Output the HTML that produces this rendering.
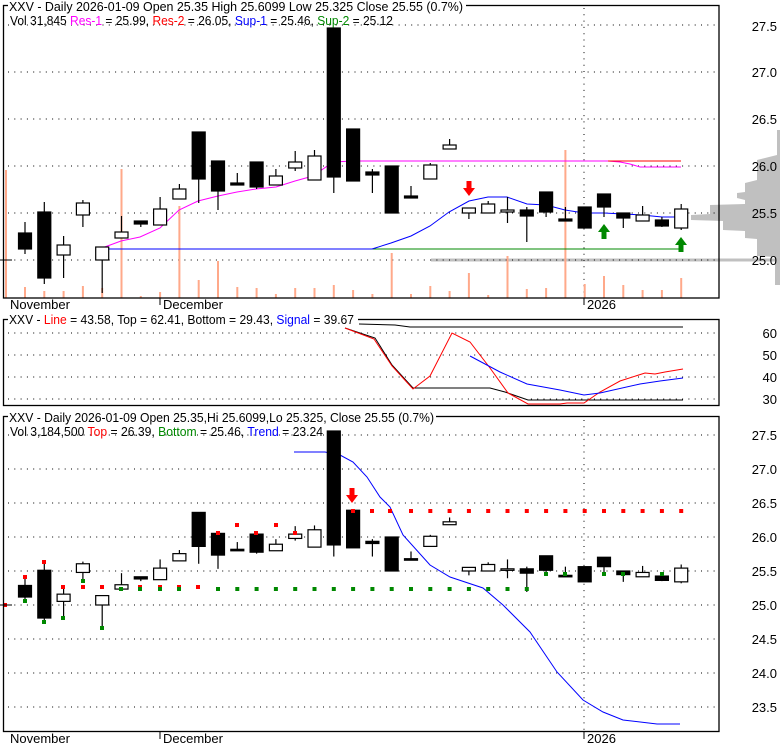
<!DOCTYPE html>
<html><head><meta charset="utf-8"><style>
html,body{margin:0;padding:0;background:#fff;width:780px;height:745px;overflow:hidden}
svg{display:block;font-family:"Liberation Sans",Arial,sans-serif}
</style></head><body>
<svg id="s" width="780" height="745" viewBox="0 0 780 745" xmlns="http://www.w3.org/2000/svg"></svg>
<script>
const S=document.getElementById('s');let h='';
const X=i=>25+i*19.3;
// panel1 candles: [top,bottom,filled,wickHigh,wickLow]
const C=[[233,249,1,222,254],[212,278,1,202,284],[245,255,0,236,278],[203,215,0,200,227],[247,260,0,247,293],[232,238,0,216,238],[221,224,1,221,227],[209,225,0,197,225],[189,199,0,184,199],[132,179,1,132,203],[161,191,1,161,210],[183,185,1,173,185],[162,187,1,162,189],[176,185,0,169,185],[162,168,0,151,171],[156,180,0,150,180],[28,177,1,28,193],[129,181,1,129,181],[172,175,1,169,193],[166,213,1,166,213],[196,198,1,186,198],[165,179,0,163,179],[145,149,0,139,149],[208,213,0,208,219],[204,213,0,201,213],[210,212,0,197,223],[210,216,1,207,242],[192,212,1,192,217],[219,221,1,207,221],[207,228,1,207,228],[194,207,1,194,217],[213,218,1,213,228],[215,221,0,206,221],[220,226,1,217,227],[209,228,0,204,230]];
const V=[287,291,291,286,288,169,296,292,206,280,261,287,288,294,288,288,285,290,294,253,294,286,291,273,295,256,289,288,150,284,276,285,290,290,278];
function grid(x1,x2,ys){ys.forEach(y=>h+=`<line x1="${x1}" y1="${y}" x2="${x2}" y2="${y}" stroke="#000" stroke-dasharray="1 5.3"/>`)}
function candles(m,top16){C.forEach((c,i)=>{let x=X(i),t=m(c[0]),b=m(c[1]),wh=m(c[3]),wl=m(c[4]);if(i==16&&top16){t=top16;wh=top16}
h+=`<line x1="${x}" y1="${wh}" x2="${x}" y2="${wl}" stroke="#000" stroke-width="1.2"/>`;
let bh=Math.max(b-t,1.5);h+=`<rect x="${x-6.5}" y="${t}" width="13" height="${bh}" fill="${c[2]?'#000':'#fff'}" stroke="#000" stroke-width="1.2"/>`})}
function pl(pts,col,w){h+=`<polyline points="${pts.map(p=>p.join(',')).join(' ')}" fill="none" stroke="${col}" stroke-width="${w||1}"/>`}
function txt(x,y,parts,len){h+=`<text x="${x}" y="${y}" font-size="13" ${len?`textLength="${len}" lengthAdjust="spacingAndGlyphs"`:''}>`+parts.map(p=>`<tspan fill="${p[1]||'#000'}">${p[0]}</tspan>`).join('')+`</text>`}
function upArrow(x,y,c){h+=`<polygon points="${x},${y} ${x+6},${y+8} ${x+2.5},${y+8} ${x+2.5},${y+15} ${x-2.5},${y+15} ${x-2.5},${y+8} ${x-6},${y+8}" fill="${c}"/>`}
function dnArrow(x,y,c){h+=`<polygon points="${x},${y} ${x+6},${y-8} ${x+2.5},${y-8} ${x+2.5},${y-15} ${x-2.5},${y-15} ${x-2.5},${y-8} ${x-6},${y-8}" fill="${c}"/>`}
// ===== Panel 1 =====
h+=`<polygon points="780,130 777,130 777,155 757,160 757,180 745,183 745,192 737,193 737,198 745,200 745,204 710,205 710,214 691,215 691,220 723,221 723,230 745,231 745,238 757,239 757,256 775,257 775,285 780,285" fill="#c0c0c0"/>`;
h+=`<rect x="431" y="258.5" width="349" height="3" fill="#c0c0c0"/>`;
grid(8,719,[25,72,119,166,213,260]);
h+=`<line x1="584" y1="8" x2="584" y2="298" stroke="#000" stroke-dasharray="1 5.3"/>`;
h+=`<line x1="6" y1="170" x2="6" y2="298" stroke="#ffa98a" stroke-width="2"/>`;
V.forEach((v,i)=>h+=`<line x1="${X(i)}" y1="${v}" x2="${X(i)}" y2="298" stroke="#ffa98a" stroke-width="2"/>`);
pl([[102,248],[121,241],[140,237],[160,228],[179,210],[198,201],[218,196],[237,192],[256,189],[276,187],[295,181],[313,176],[333,162],[353,161],[608,161],[620,162],[630,164],[640,167],[681,167]],'#f0f');
pl([[608,161],[681,161]],'#f00');
pl([[102,249],[372,249]],'#00f');
pl([[372,249],[681,249]],'#080');
pl([[372,249],[391,243],[411,236],[430,226],[449,212],[469,201],[488,197],[507,197],[527,204],[546,205],[565,210],[584,213],[604,213],[623,214],[642,215],[662,217],[681,217]],'#00f');
candles(y=>y);
dnArrow(469,196,'#f00');upArrow(604,224,'#080');upArrow(681,237,'#080');
h+=`<rect x="3.5" y="5.5" width="715.5" height="292.5" fill="none" stroke="#000" stroke-width="1.3"/>`;
h+=`<line x1="0" y1="260" x2="12" y2="260" stroke="#000"/>`;
h+=`<rect x="8" y="0" width="458" height="13" fill="#fff"/>`;
txt(9,11,[['XXV - Daily 2026-01-09 Open 25.35  High 25.6099  Low 25.325  Close 25.55 (0.7%)']],454);
txt(10,25,[['Vol 31,845 '],['Res-1','#f0f'],[' = 25.99, '],['Res-2','#f00'],[' = 26.05, '],['Sup-1','#00f'],[' = 25.46, '],['Sup-2','#080'],[' = 25.12']],383);
[['27.5',31],['27.0',77],['26.5',124],['26.0',171],['25.5',218],['25.0',265]].forEach(a=>h+=`<text x="777" y="${a[1]}" font-size="13" text-anchor="end">${a[0]}</text>`);
h+=`<line x1="160" y1="298" x2="160" y2="305" stroke="#000"/><line x1="584" y1="298" x2="584" y2="305" stroke="#000"/>`;
h+=`<text x="10" y="309" font-size="13">November</text><text x="163" y="309" font-size="13">December</text><text x="587" y="309" font-size="13">2026</text>`;
// ===== Panel 2 =====
grid(8,719,[333,355,377,399]);
pl([[359,324],[395,325],[410,327],[683,327]],'#000');
pl([[345,328],[375,338],[392,365],[413,388],[490,388],[505,392],[528,400],[683,400]],'#000');
pl([[345,328],[374,339],[392,366],[413,389],[430,376],[452,333],[470,342],[490,368],[508,393],[528,404],[560,404],[567,403],[584,403],[600,392],[620,381],[645,373],[655,374],[665,372],[683,369]],'#f00');
pl([[470,356],[500,372],[527,384],[560,390],[584,395],[600,393],[640,384],[660,381],[683,378]],'#00f');
h+=`<rect x="3.5" y="319.5" width="715.5" height="86" fill="none" stroke="#000" stroke-width="1.3"/>`;
h+=`<rect x="8" y="313" width="350" height="13" fill="#fff"/>`;
txt(9,324,[['XXV - '],['Line','#f00'],[' = 43.58, Top = 62.41, Bottom = 29.43, '],['Signal','#00f'],[' = 39.67']],345);
[['60',338],['50',360],['40',382],['30',404]].forEach(a=>h+=`<text x="777" y="${a[1]}" font-size="13" text-anchor="end">${a[0]}</text>`);
// ===== Panel 3 =====
const M=y=>605-(260-y)*68/94;
grid(8,719,[435,469,503,537,571,605,639,673,707]);
h+=`<line x1="584" y1="420" x2="584" y2="732" stroke="#000" stroke-dasharray="1 5.3"/>`;
pl([[294,452],[325,452],[340,455],[353,462],[367,477],[380,497],[390,507],[403,535],[430,565],[450,577],[483,588],[503,605],[530,632],[557,672],[583,700],[603,712],[623,720],[657,724],[680,724]],'#00f');
candles(M,431);
const red=[[5,605],[25,577],[44,562],[63,587],[83,587],[102,587],[140,587],[160,587],[179,587],[198,587],[218,533],[237,525],[256,533],[276,525],[295,533],[353,511],[372,511],[390,511]];
for(let i=20;i<35;i++)red.push([X(i),511]);
red.forEach(p=>h+=`<rect x="${p[0]-2}" y="${p[1]-2}" width="4" height="4" fill="#f00"/>`);
const grn=[[25,601],[44,622],[63,618],[83,581],[102,628],[121,589],[140,589],[160,589],[179,589],[546,574],[565,574],[604,574],[623,574],[662,574]];
for(let i=10;i<=26;i++)grn.push([X(i),589]);
grn.forEach(p=>h+=`<rect x="${p[0]-2}" y="${p[1]-2}" width="4" height="4" fill="#080"/>`);
dnArrow(352,503,'#f00');
h+=`<rect x="3.5" y="416.5" width="715.5" height="315" fill="none" stroke="#000" stroke-width="1.3"/>`;
h+=`<line x1="0" y1="605" x2="12" y2="605" stroke="#000"/>`;
h+=`<rect x="8" y="410" width="428" height="13" fill="#fff"/>`;
txt(9,422,[['XXV - Daily 2026-01-09 Open 25.35,Hi 25.6099,Lo 25.325, Close 25.55 (0.7%)']],425);
txt(10,436,[['Vol 3,184,500 '],['Top','#f00'],[' = 26.39, '],['Bottom','#080'],[' = 25.46, '],['Trend','#00f'],[' = 23.24']],313);
[['27.5',440],['27.0',474],['26.5',508],['26.0',542],['25.5',576],['25.0',610],['24.5',644],['24.0',678],['23.5',712]].forEach(a=>h+=`<text x="777" y="${a[1]}" font-size="13" text-anchor="end">${a[0]}</text>`);
h+=`<line x1="160" y1="732" x2="160" y2="739" stroke="#000"/><line x1="584" y1="732" x2="584" y2="739" stroke="#000"/>`;
h+=`<text x="10" y="743" font-size="13">November</text><text x="163" y="743" font-size="13">December</text><text x="587" y="743" font-size="13">2026</text>`;
S.innerHTML=h;
</script>
</body></html>
